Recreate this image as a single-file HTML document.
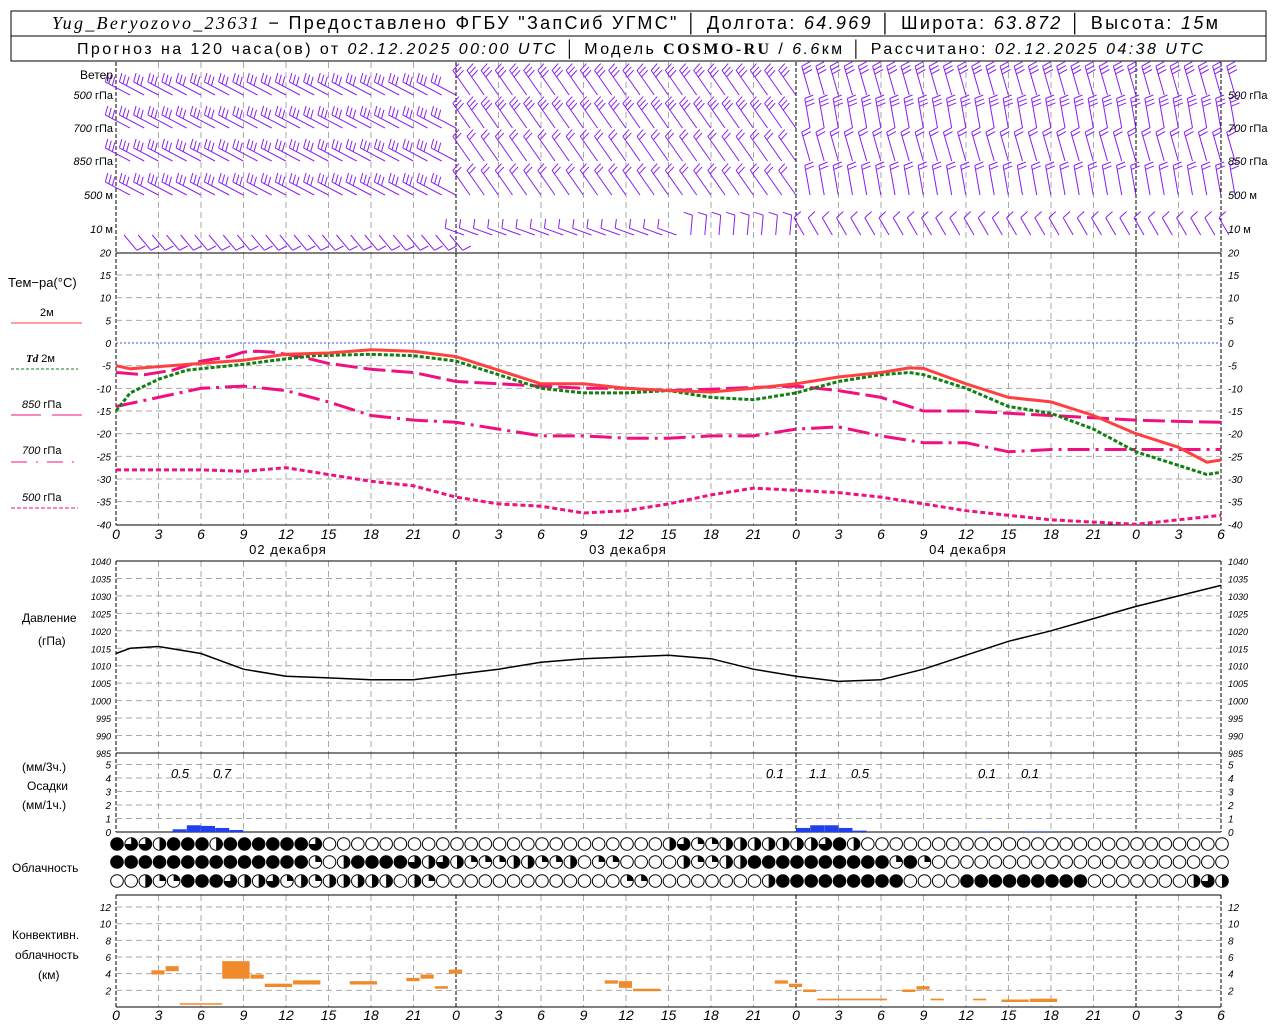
<!DOCTYPE html>
<html><head><meta charset="utf-8"><style>
html,body{margin:0;padding:0;background:#fff;width:1280px;height:1024px;overflow:hidden}
svg{display:block}
text{font-family:"Liberation Sans","DejaVu Sans",sans-serif;fill:#000}
.it{font-style:italic}
</style></head><body>
<svg id="s" width="1280" height="1024" xmlns="http://www.w3.org/2000/svg">
<rect x="11" y="11" width="1255" height="50" fill="none" stroke="#000" stroke-width="1"/>
<line x1="11" y1="36" x2="1266" y2="36" stroke="#000"/>
<text x="52" y="29" font-size="18" textLength="1166" lengthAdjust="spacing"><tspan font-family="Liberation Serif" font-style="italic">Yug_Beryozovo_23631</tspan> − Предоставлено ФГБУ "ЗапСиб УГМС" │ Долгота: <tspan class="it">64.969</tspan> │ Широта: <tspan class="it">63.872</tspan> │ Высота: <tspan class="it">15</tspan>м</text>
<text x="77" y="54" font-size="16" textLength="1126" lengthAdjust="spacing">Прогноз на 120 часа(ов) от <tspan class="it">02.12.2025 00:00 UTC</tspan>  │ Модель <tspan font-family="Liberation Serif" font-weight="bold">COSMO-RU</tspan> / <tspan class="it">6.6</tspan>км │ Рассчитано: <tspan class="it">02.12.2025 04:38 UTC</tspan></text>
<g id="g"></g>
</svg>
<script>
const NS="http://www.w3.org/2000/svg",g=document.getElementById('g');
function el(t,a,txt){const e=document.createElementNS(NS,t);for(const k in a)e.setAttribute(k,a[k]);if(txt!==undefined)e.textContent=txt;g.appendChild(e);return e;}
const X=h=>116+h*1105/78;
const L=116,R=1221;
for(let h=0;h<=78;h+=3){const x=X(h);const day=(h%24==0);
 [[62,253],[253,525],[561,753],[753,832],[895,1007]].forEach(([a,b])=>{
  el('line',{x1:x,y1:a,x2:x,y2:b,stroke:day||h==0||h==78?'#000':'#aaa','stroke-dasharray':day||h==0||h==78?'4,2':'6,4','stroke-width':1});});}
const TY=t=>343-t*4.533;
for(let t=-40;t<=20;t+=5){const y=TY(t);
 if(t!=20&&t!=-40)el('line',{x1:L,y1:y,x2:R,y2:y,stroke:t==0?'#3050ff':'#aaa','stroke-dasharray':t==0?'2,2':'6,4'});
 el('text',{x:111,y:y+4,'font-size':10,'text-anchor':'end',class:'it'},t);
 el('text',{x:1228,y:y+4,'font-size':10,class:'it'},t);}
const PY=p=>561+(1040-p)*3.49;
for(let p=985;p<=1040;p+=5){const y=PY(p);
 if(p!=985&&p!=1040)el('line',{x1:L,y1:y,x2:R,y2:y,stroke:'#aaa','stroke-dasharray':'6,4'});
 el('text',{x:111,y:y+4,'font-size':9,'text-anchor':'end',class:'it'},p);
 el('text',{x:1228,y:y+4,'font-size':9,class:'it'},p);}
const RY=m=>832-m*13.5;
for(let m=0;m<=5;m++){const y=RY(m);
 if(m>0)el('line',{x1:L,y1:y,x2:R,y2:y,stroke:'#aaa','stroke-dasharray':'6,4'});
 el('text',{x:111,y:y+4,'font-size':10,'text-anchor':'end',class:'it'},m);
 el('text',{x:1228,y:y+4,'font-size':10,class:'it'},m);}
const CY=k=>1007-k*8.33;
for(let k=0;k<=12;k+=2){const y=CY(k);
 if(k>0)el('line',{x1:L,y1:y,x2:R,y2:y,stroke:'#aaa','stroke-dasharray':'6,4'});
 if(k>0){el('text',{x:111,y:y+4,'font-size':10,'text-anchor':'end',class:'it'},k);
 el('text',{x:1228,y:y+4,'font-size':10,class:'it'},k);}}
[253,525,561,753,832,895,1007].forEach(y=>el('line',{x1:L,y1:y,x2:R,y2:y,stroke:'#000'}));
for(let h=0;h<=78;h+=3){const lab=h%24;
 el('text',{x:X(h),y:539,'font-size':14,'text-anchor':'middle',class:'it'},lab);
 el('text',{x:X(h),y:1020,'font-size':14,'text-anchor':'middle',class:'it'},lab);}
[[12,'02 декабря'],[36,'03 декабря'],[60,'04 декабря']].forEach(([h,s])=>el('text',{x:X(h)+2,y:554,'font-size':13,'text-anchor':'middle','letter-spacing':'1'},s));
function curve(pts,f,st){let d='';pts.forEach((p,i)=>{d+=(i?'L':'M')+X(p[0]).toFixed(1)+','+f(p[1]).toFixed(1);});el('path',Object.assign({d:d,fill:'none'},st));}
const T2=[[0,-5],[1,-5.7],[3,-5.2],[6,-4.5],[9,-3.8],[12,-2.5],[15,-2.2],[18,-1.5],[21,-1.8],[24,-3],[27,-6],[30,-9],[33,-9],[36,-10],[39,-10.5],[42,-10.8],[45,-10],[48,-9],[51,-7.5],[54,-6.5],[56,-5.5],[57,-5.6],[60,-9],[63,-12],[66,-13],[69,-16],[72,-20],[75,-23],[77,-26.3],[78,-25.8]];
const TD=[[0,-15],[1,-11],[3,-8],[5,-6],[9,-4.7],[12,-3.5],[14,-2.8],[18,-2.5],[21,-2.8],[24,-4],[27,-7],[30,-10],[33,-11],[36,-11],[39,-10.5],[42,-12],[45,-12.5],[48,-11],[51,-8.5],[54,-7],[56,-6.5],[57,-7],[60,-10],[63,-14],[66,-15.5],[69,-19],[72,-24],[75,-27],[77,-29],[78,-28.5]];
const P850=[[0,-6.5],[2,-7],[4,-6],[6,-4],[8,-3],[9,-2],[10,-1.8],[11,-2],[13,-3],[15,-4.5],[18,-5.8],[21,-6.5],[24,-8.5],[27,-9],[30,-9.5],[33,-10],[36,-10],[39,-10.5],[42,-10.2],[45,-9.8],[48,-9.5],[51,-10.5],[54,-12],[57,-15],[60,-15],[63,-15.5],[66,-16],[69,-16.5],[72,-17],[75,-17.3],[78,-17.5]];
const P700=[[0,-14],[3,-12],[6,-10],[9,-9.5],[12,-10.5],[15,-13],[18,-16],[21,-17],[24,-17.5],[27,-19],[30,-20.5],[33,-20.5],[36,-21],[39,-21],[42,-20.5],[45,-20.5],[48,-19],[51,-18.5],[54,-20.5],[57,-22],[60,-22],[63,-24],[66,-23.5],[69,-23.5],[72,-23.5],[75,-23.5],[78,-23.5]];
const P500=[[0,-28],[3,-28],[6,-28],[9,-28.3],[12,-27.5],[15,-29],[18,-30.5],[21,-31.5],[24,-34],[27,-35.5],[30,-36],[33,-37.5],[36,-37],[39,-35.5],[42,-33.5],[45,-32],[48,-32.5],[51,-33],[54,-34],[57,-35.5],[60,-37],[63,-38],[66,-39],[69,-39.5],[72,-40],[75,-39],[78,-38]];
curve(P500,TY,{stroke:'#f01080','stroke-width':3,'stroke-dasharray':'5,3'});
curve(P700,TY,{stroke:'#f01080','stroke-width':3,'stroke-dasharray':'22,6,3,6'});
curve(P850,TY,{stroke:'#f01080','stroke-width':3,'stroke-dasharray':'22,6'});
curve(TD,TY,{stroke:'#108010','stroke-width':3,'stroke-dasharray':'4,2'});
curve(T2,TY,{stroke:'#ff4040','stroke-width':3});
const PR=[[0,1013.5],[1,1015],[3,1015.5],[6,1013.5],[9,1009],[12,1007],[15,1006.5],[18,1006],[21,1006],[24,1007.5],[27,1009],[30,1011],[33,1012],[36,1012.5],[39,1013],[42,1012],[45,1009],[48,1007],[51,1005.5],[54,1006],[57,1009],[60,1013],[63,1017],[66,1020],[69,1023.5],[72,1027],[75,1030],[78,1033]];
curve(PR,PY,{stroke:'#000','stroke-width':1.5});
[[4,.2],[5,.5],[6,.45],[7,.3],[8,.15],[48,.3],[49,.5],[50,.5],[51,.3],[52,.1],[61,.05],[64,.05],[65,.05]].forEach(([h,v])=>el('rect',{x:X(h),y:RY(v),width:14,height:v*13.5,fill:'#2040f0'}));
[[180,'0.5'],[222,'0.7'],[775,'0.1'],[818,'1.1'],[860,'0.5'],[987,'0.1'],[1030,'0.1']].forEach(([x,s])=>el('text',{x:x,y:778,'font-size':13,'text-anchor':'middle',class:'it'},s));
[[2.5,3.5,3.9,4.4],[3.5,4.5,4.3,4.9],[7.5,9.5,3.4,5.5],[9.5,10.5,3.4,3.9],[10.5,12.5,2.4,2.8],[12.5,14.5,2.7,3.2],[16.5,18.5,2.7,3.1],[20.5,21.5,3.1,3.5],[21.5,22.5,3.4,3.9],[22.5,23.5,2.2,2.5],[23.5,24.5,4,4.5],[34.5,35.5,2.8,3.2],[35.5,36.5,2.3,3.1],[36.5,38.5,1.9,2.2],[46.5,47.5,2.8,3.2],[47.5,48.5,2.4,2.8],[48.5,49.5,1.8,2.1],[49.5,54.5,0.8,1],[55.5,56.5,1.8,2.1],[56.5,57.5,2.1,2.5],[57.5,58.5,0.8,1],[60.5,61.5,0.8,1],[62.5,64.5,0.6,0.9],[64.5,66.5,0.6,1]].forEach(([a,b,lo,hi])=>el('rect',{x:X(a),y:CY(hi),width:X(b)-X(a)-1,height:(hi-lo)*8.33,fill:'#f08a2a'}));
el('line',{x1:X(4.5),y1:1004,x2:X(7.5),y2:1004,stroke:'#f08a2a','stroke-width':1.5});
const rows=[
"FTTHFFFHFFFFFFT"+"E".repeat(24)+"HTQQHHHHHHHTFH"+"E".repeat(26),
"FFFFFFFFFFFFFFQEHFFFFTHTHQQQHHQQHEQQEEEEHQQHHFFFFFFFFFFQFQ"+"E".repeat(21),
"EEHQQFFFTHHTQHQHHHHHEHQ"+"E".repeat(13)+"QQ"+"E".repeat(8)+"HFFFFFFFFF"+"EEEE"+"FFFFFFFFF"+"EEEEEEE"+"HTH"];
[844,862,881].forEach((cy,ri)=>{const s=rows[ri];for(let h=0;h<=78;h++){const c=s[h]||'E';const cx=X(h)+1,r=6.3;
 if(c=='F'){el('circle',{cx:cx,cy:cy,r:r,fill:'#000',stroke:'#000'});continue;}
 el('circle',{cx:cx,cy:cy,r:r,fill:'#fff',stroke:'#000','stroke-width':1});
 if(c=='H')el('path',{d:`M${cx},${cy-r}A${r},${r} 0 0 1 ${cx},${cy+r}Z`,fill:'#000'});
 if(c=='Q')el('path',{d:`M${cx},${cy}L${cx},${cy-r}A${r},${r} 0 0 1 ${cx+r},${cy}Z`,fill:'#000'});
 if(c=='T')el('path',{d:`M${cx},${cy}L${cx},${cy-r}A${r},${r} 0 1 1 ${cx-r},${cy}Z`,fill:'#000'});
}});
// wind barbs
const lv=[95,128,161,195,229];
function ang(li,h){
 if(li==4){if(h<24)return -130; if(h<40)return 20; if(h<48)return 95; return 60;}
 if(h<24)return 28; if(h<48)return 55; return 74+(li%2)*6;}
for(let li=0;li<5;li++)for(let h=0;h<=78;h++){
 const a=ang(li,h)*Math.PI/180,len=li==4?20:(h<24?28:30);
 const sx=X(h)+(li==4?8:14),sy=lv[li]+(li==4?6:0);
 const tx=sx-len*Math.cos(a),ty=sy-len*Math.sin(a);
 let d=`M${sx.toFixed(1)},${sy.toFixed(1)}L${tx.toFixed(1)},${ty.toFixed(1)}`;
 const nb=li==4?1:(h<24?3:(li<2?3:2));
 const ux=Math.cos(a),uy=Math.sin(a);let px=uy,py=-ux;
 if(py>0){px=-px;py=-py;}
 for(let k=0;k<nb;k++){const bx=tx+ux*4*k,by=ty+uy*4*k;
  d+=`M${bx.toFixed(1)},${by.toFixed(1)}l${(px*9-ux*2).toFixed(1)},${(py*9-uy*2).toFixed(1)}`;}
 el('path',{d:d,stroke:'#8a1ef0',fill:'none','stroke-width':1});
}
const ll=[['500','гПа',95],['700','гПа',128],['850','гПа',161],['500','м',195],['10','м',229]];
ll.forEach(([n,u,y])=>{const t=el('text',{x:113,y:y+4,'font-size':11,'text-anchor':'end'});t.innerHTML=`<tspan font-style="italic">${n}</tspan> ${u}`;
 const t2=el('text',{x:1228,y:y+4,'font-size':11});t2.innerHTML=`<tspan font-style="italic">${n}</tspan> ${u}`;});
el('text',{x:113,y:79,'font-size':12,'text-anchor':'end'},'Ветер');
el('text',{x:8,y:287,'font-size':13},'Тем−ра(°C)');
el('text',{x:40,y:316,'font-size':11},'2м');
el('line',{x1:11,y1:323,x2:82,y2:323,stroke:'#ff4040','stroke-width':1});
const tdl=el('text',{x:26,y:362,'font-size':11});tdl.innerHTML='<tspan font-style="italic" font-weight="bold" font-family="Liberation Serif">Td</tspan>  2м';
el('line',{x1:11,y1:369,x2:78,y2:369,stroke:'#108010','stroke-dasharray':'3,2'});
const a8=el('text',{x:22,y:408,'font-size':11});a8.innerHTML='<tspan font-style="italic">850</tspan> гПа';
el('line',{x1:11,y1:415,x2:41,y2:415,stroke:'#f01080'});el('line',{x1:52,y1:415,x2:82,y2:415,stroke:'#f01080'});
const a7=el('text',{x:22,y:454,'font-size':11});a7.innerHTML='<tspan font-style="italic">700</tspan> гПа';
el('line',{x1:11,y1:462,x2:78,y2:462,stroke:'#f01080','stroke-dasharray':'16,9,2,9'});
const a5=el('text',{x:22,y:501,'font-size':11});a5.innerHTML='<tspan font-style="italic">500</tspan> гПа';
el('line',{x1:11,y1:508,x2:78,y2:508,stroke:'#f01080','stroke-dasharray':'4,2'});
el('text',{x:22,y:622,'font-size':12},'Давление');
el('text',{x:38,y:645,'font-size':12},'(гПа)');
el('text',{x:22,y:771,'font-size':12},'(мм/3ч.)');
el('text',{x:27,y:790,'font-size':12},'Осадки');
el('text',{x:22,y:809,'font-size':12},'(мм/1ч.)');
el('text',{x:12,y:872,'font-size':12},'Облачность');
el('text',{x:12,y:939,'font-size':12},'Конвективн.');
el('text',{x:15,y:959,'font-size':12},'облачность');
el('text',{x:38,y:979,'font-size':12},'(км)');
</script>
</body></html>
